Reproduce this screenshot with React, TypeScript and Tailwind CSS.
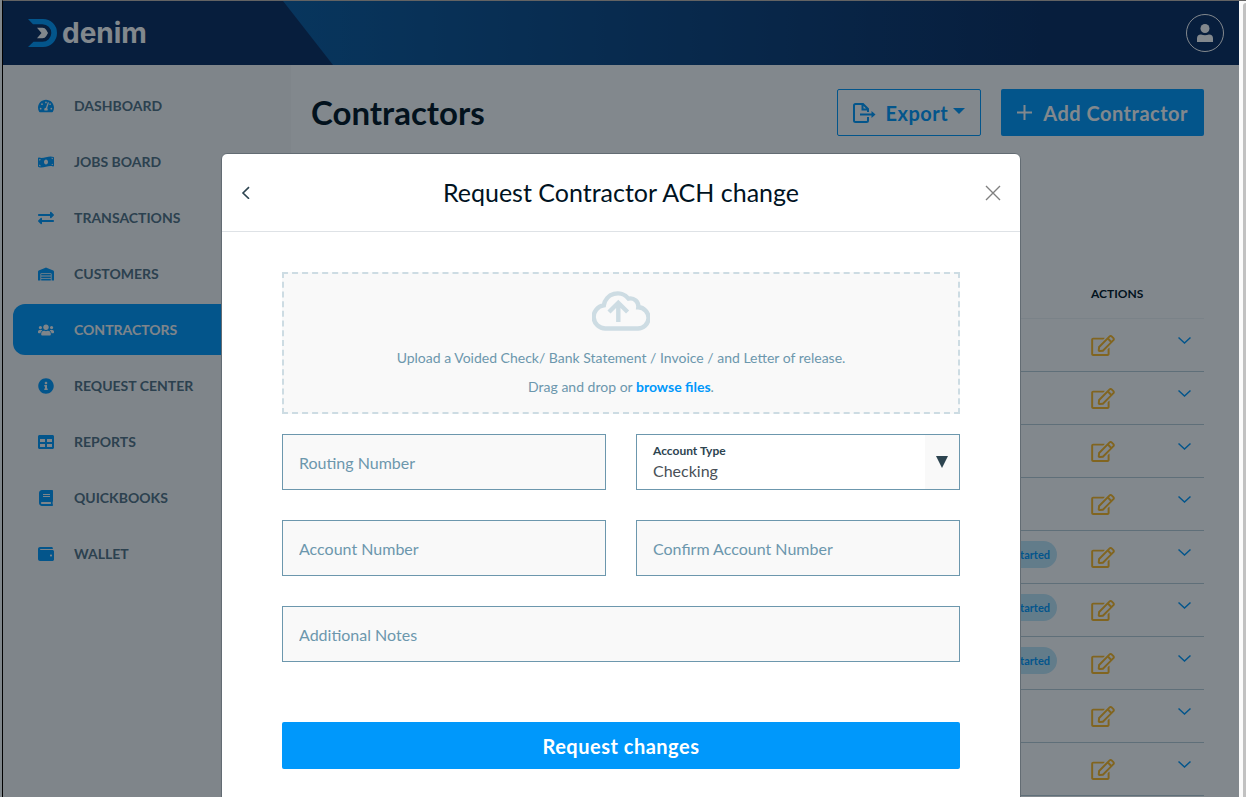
import React from "react";
import {
  FaTachometerAlt,
  FaMoneyBillWave,
  FaExchangeAlt,
  FaWarehouse,
  FaUsers,
  FaInfoCircle,
  FaTable,
  FaBook,
  FaWallet,
} from "react-icons/fa";

const navItems = [
  { label: "DASHBOARD", Icon: FaTachometerAlt },
  { label: "JOBS BOARD", Icon: FaMoneyBillWave },
  { label: "TRANSACTIONS", Icon: FaExchangeAlt },
  { label: "CUSTOMERS", Icon: FaWarehouse },
  { label: "CONTRACTORS", Icon: FaUsers, active: true },
  { label: "REQUEST CENTER", Icon: FaInfoCircle },
  { label: "REPORTS", Icon: FaTable },
  { label: "QUICKBOOKS", Icon: FaBook },
  { label: "WALLET", Icon: FaWallet },
];

const rows = ["", "", "", "", "Not Started", "Not Started", "Not Started", "", ""];

function Logo() {
  return (
    <a href="#home" className="flex items-center gap-1">
      <svg width="30" height="28" viewBox="0 0 30 28" aria-hidden="true">
        <path d="M0 0H15A14 14 0 0 1 15 28H0L5.500 22.800H14.500A8.800 8.800 0 0 0 14.500 5.200H5Z" fill="#0098fb" />
        <path d="M9 8.800H14.500Q17 8.800 18.300 11L20 14L18.300 17Q17 19.200 14.500 19.200H9L13.500 14Z" fill="#fff" />
      </svg>
      <span className="font-[Inter] text-[28px] leading-8 font-bold text-white">denim</span>
    </a>
  );
}

function Header() {
  return (
    <header className="relative flex h-16 items-center justify-between bg-linear-to-r from-[#076cb8] to-[#092a5e] to-85% pr-[15px] pl-[25px]">
      <svg className="absolute top-0 left-0 h-16 w-[330px]" viewBox="0 0 330 64" aria-hidden="true">
        <path d="M0 0H280L330 64H0Z" fill="#092a5e" />
      </svg>
      <div className="relative">
        <Logo />
      </div>
      <button aria-label="Account" className="flex size-[38px] items-center justify-center rounded-full border border-white">
        <svg width="16" height="18" viewBox="0 0 16 18" fill="#fff" aria-hidden="true">
          <circle cx="8" cy="4.500" r="4.500" />
          <path d="M0 18V14.500Q0 10.500 4 10.500Q8 11.800 12 10.500Q16 10.500 16 14.500V18Z" />
        </svg>
      </button>
    </header>
  );
}

function Sidebar() {
  return (
    <nav className="w-72 shrink-0 bg-[#f9f9f9] pt-[15px] pl-2.5">
      <ul className="flex flex-col gap-[5px]">
        {navItems.map(({ label, Icon, active }) => (
          <li key={label}>
            <a
              href="#nav"
              className={
                active
                  ? "flex h-[51px] items-center gap-5 rounded-l-xl bg-[#0098fb] pl-[25px] text-sm font-bold text-[#f9f9f9]"
                  : "flex h-[51px] items-center gap-5 pl-[25px] text-sm font-bold text-[#527083]"
              }
            >
              <Icon size={16} className={active ? "text-[#f9f9f9]" : "text-[#0098fb]"} />
              {label}
            </a>
          </li>
        ))}
      </ul>
    </nav>
  );
}

function EditIcon() {
  return (
    <svg width="24" height="21" viewBox="0 0 576 512" fill="#fdb825" aria-hidden="true">
      <path d="M402.300 344.900l32-32c5-5 13.700-1.500 13.700 5.700V464c0 26.500-21.500 48-48 48H48c-26.500 0-48-21.500-48-48V112c0-26.500 21.500-48 48-48h273.500c7.100 0 10.700 8.600 5.700 13.700l-32 32c-1.500 1.500-3.500 2.300-5.700 2.300H48v352h352V350.500c0-2.100.8-4.100 2.300-5.600zm156.600-201.800L296.300 405.700l-90.400 10c-26.200 2.900-48.500-19.200-45.600-45.600l10-90.400L432.900 17.100c22.900-22.900 59.900-22.900 82.700 0l43.200 43.200c22.900 22.900 22.900 60 .1 82.800zM460.100 174L402 115.900 216.200 301.800l-7.300 65.300 65.300-7.300L460.100 174zm64.800-79.700l-43.200-43.200c-4.100-4.100-10.800-4.100-14.800 0L436 82l58.100 58.100 30.900-30.900c4-4.200 4-10.800-.1-14.900z" />
    </svg>
  );
}

function Contractors() {
  return (
    <main className="min-w-0 flex-1 bg-white pt-6 pr-[35px] pl-5">
      <div className="flex items-start justify-between">
        <h1 className="pt-[3px] text-[33px] leading-10 font-bold text-[#00131f]">Contractors</h1>
        <div className="flex gap-5">
          <button className="flex h-[47px] items-center rounded-xs border border-[#0098fb] px-[15px] text-xl font-bold tracking-wide text-[#0098fb]">
            <svg width="23" height="20" viewBox="0 0 23 20" fill="none" stroke="#0098fb" strokeWidth="2" aria-hidden="true">
              <path d="M15 9V6L10 1H2.500Q1 1 1 2.500V17.500Q1 19 2.500 19H13.500Q15 19 15 17.500V14M9.500 1V6.500H15M7 11.500H20" />
              <path d="M18.500 8L22.500 11.500L18.500 15Z" fill="#0098fb" stroke="none" />
            </svg>
            <span className="ml-2.5">Export</span>
            <svg className="mb-1 ml-[5px]" width="12" height="6" viewBox="0 0 12 6" aria-hidden="true">
              <path d="M0 0H12L6 6Z" fill="#0098fb" />
            </svg>
          </button>
          <button className="flex h-[47px] items-center gap-[11px] rounded-xs bg-[#0098fb] px-4 text-xl font-bold tracking-wide text-white">
            <svg width="15" height="16" viewBox="0 0 15 16" stroke="#fff" strokeWidth="2" aria-hidden="true">
              <path d="M7.500 0V15M0 7.500H15" />
            </svg>
            Add Contractor
          </button>
        </div>
      </div>
      <table className="mt-[131px] w-full table-fixed">
        <colgroup>
          <col />
          <col className="w-[152px]" />
          <col className="w-[74px]" />
          <col className="w-10" />
        </colgroup>
        <thead>
          <tr className="h-[51px] border-b border-[#eef2f5]">
            <th></th>
            <th></th>
            <th className="pt-1 pl-px text-left text-xs font-bold text-[#00131f]">ACTIONS</th>
            <th></th>
          </tr>
        </thead>
        <tbody>
          {rows.map((status, i) => (
            <tr key={i} className="h-[53px] border-b border-[#b9cdd6]">
              <td></td>
              <td className="pr-[33px] pb-[5px] text-right">
                {status && (
                  <span className="inline-block rounded-full bg-[#bfe6f9] px-[7px] py-[5px] text-[11px] leading-[17px] font-bold text-[#0098fb]">
                    {status}
                  </span>
                )}
              </td>
              <td className="pl-px">
                <button aria-label="Edit" className="block pt-0.5">
                  <EditIcon />
                </button>
              </td>
              <td>
                <button aria-label="Expand" className="mb-2.5 ml-3.5 block">
                  <svg width="13" height="8" viewBox="0 0 13 8" fill="none" stroke="#0098fb" strokeWidth="1.500" aria-hidden="true">
                    <path d="M.5 1.500L6.500 7L12.500 1.500" />
                  </svg>
                </button>
              </td>
            </tr>
          ))}
        </tbody>
      </table>
    </main>
  );
}

function Field({ label }: { label: string }) {
  return (
    <input
      aria-label={label}
      placeholder={label}
      className="h-14 w-full border border-[#6c97ad] bg-[#f9f9f9] px-4 text-base text-[#2d4450] placeholder:text-[#6c97ad] placeholder:opacity-100"
    />
  );
}

function AchDialog() {
  return (
    <section
      role="dialog"
      aria-labelledby="ach-title"
      className="w-[800px] rounded-md border border-[#636c73] bg-white pb-12"
    >
      <div className="flex h-[78px] items-center justify-between border-b border-[#dee2e6] px-[19px]">
        <button aria-label="Back" className="w-4">
          <svg width="9" height="13" viewBox="0 0 9 13" fill="none" stroke="#2d4450" strokeWidth="1.600" aria-hidden="true">
            <path d="M8 1.200L2 7L8 12.800" />
          </svg>
        </button>
        <h2 id="ach-title" className="pb-0.5 text-[25px] leading-8 text-[#00131f]">
          Request Contractor ACH change
        </h2>
        <button aria-label="Close">
          <svg width="16" height="16" viewBox="0 0 16 16" stroke="#808080" strokeWidth="1.400" aria-hidden="true">
            <path d="M1 1L15 15M15 1L1 15" />
          </svg>
        </button>
      </div>
      <form className="px-[60px] pt-10">
        <div className="flex h-[142px] flex-col items-center border-2 border-dashed border-[#cddce3] bg-[#f9f9f9] pt-4 text-sm text-[#6c97ad]">
          <svg width="58" height="42" viewBox="0 0 58 42" fill="none" stroke="#cddce3" strokeWidth="4.400" aria-hidden="true">
            <path d="M13.500 38.500A11.600 11.600 0 0 1 11.800 15.400A14 14 0 0 1 36.500 8.600A8 8 0 0 1 46.300 17.300A10.600 10.600 0 0 1 45.500 38.500Z" />
            <path d="M26.300 32V13.500M17 22L26.300 12.800L35.600 22" />
          </svg>
          <p className="mt-[15px] leading-[21px]">Upload a Voided Check/ Bank Statement / Invoice / and Letter of release.</p>
          <p className="mt-2 leading-[21px]">
            Drag and drop or{" "}
            <a href="#browse" className="font-bold text-[#0098fb]">
              browse files
            </a>
            .
          </p>
        </div>
        <div className="mt-5 grid grid-cols-2 gap-[30px]">
          <Field label="Routing Number" />
          <div className="relative h-14">
            <label htmlFor="account-type" className="absolute top-2 left-[17px] text-xs leading-[18px] font-bold text-[#2d4450]">
              Account Type
            </label>
            <select
              id="account-type"
              className="h-14 w-full appearance-none border border-[#6c97ad] bg-white pt-[18px] pl-4 text-base text-[#495057]"
            >
              <option>Checking</option>
              <option>Savings</option>
            </select>
            <div className="pointer-events-none absolute top-px right-px flex h-[54px] w-[34px] items-center justify-center bg-[#f9f9f9]">
              <svg width="12" height="12" viewBox="0 0 12 12" aria-hidden="true">
                <path d="M0 0H12L6 12Z" fill="#2d4450" />
              </svg>
            </div>
          </div>
          <Field label="Account Number" />
          <Field label="Confirm Account Number" />
          <div className="col-span-2">
            <Field label="Additional Notes" />
          </div>
        </div>
        <button
          type="button"
          className="mt-[60px] h-[47px] w-full rounded-xs bg-[#0098fb] text-xl font-bold tracking-wide text-white"
        >
          Request changes
        </button>
      </form>
    </section>
  );
}

export default function App() {
  return (
    <div className="flex h-screen overflow-hidden bg-[#7f868b] font-[Lato,sans-serif]">
      <div className="relative ml-0.5 flex min-w-0 flex-1 flex-col border-t border-l border-t-[#636363] border-l-black">
        <Header />
        <div className="flex min-h-0 flex-1">
          <Sidebar />
          <Contractors />
        </div>
        <div className="absolute inset-0 flex items-start justify-center bg-[#05121c]/50 pt-[152px]">
          <AchDialog />
        </div>
      </div>
      <div className="w-[7px] border-t border-t-[#636363] bg-[#fafafa] pt-0.5 pl-1">
        <div className="h-full rounded-tl bg-[#c1c1c1]"></div>
      </div>
    </div>
  );
}
